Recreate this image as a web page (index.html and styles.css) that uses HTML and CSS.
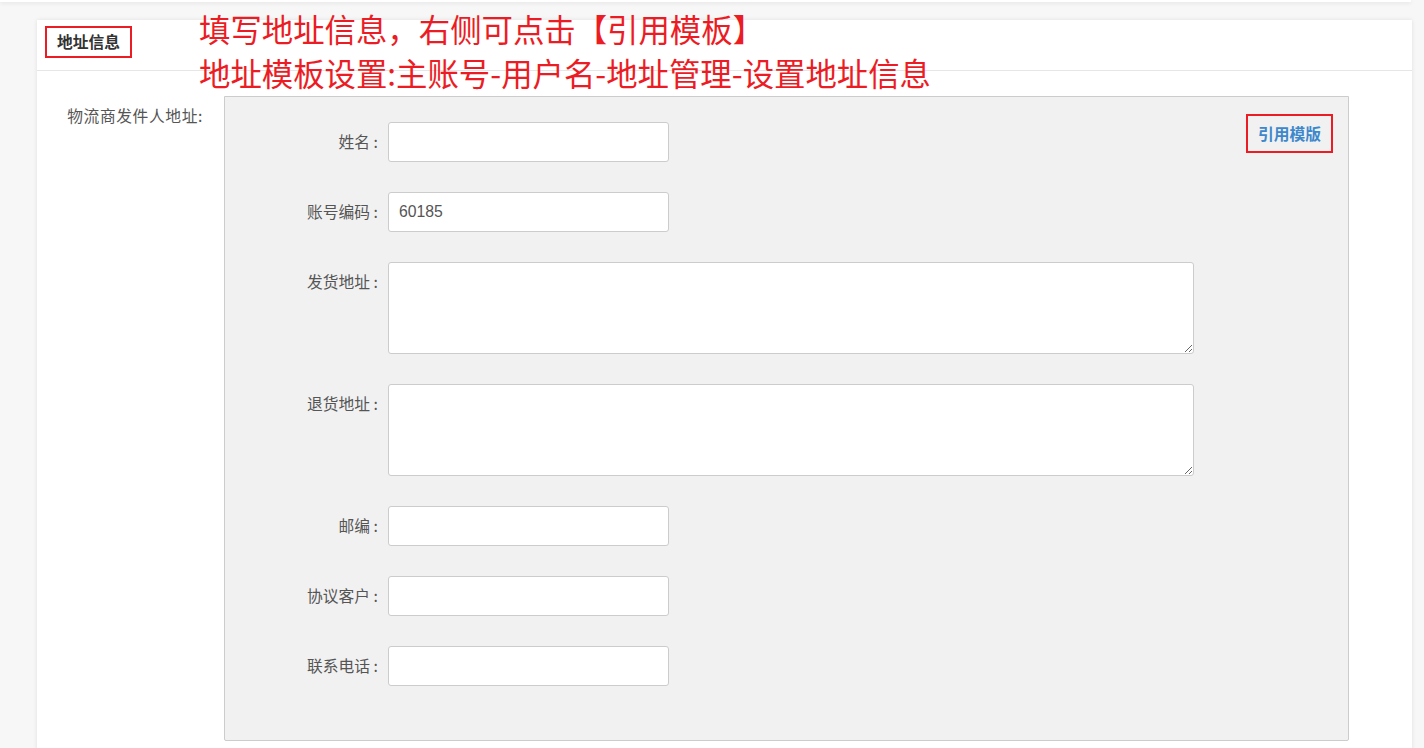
FILE: index.html
```html
<!DOCTYPE html>
<html lang="zh-CN">
<head>
<meta charset="utf-8">
<title>地址信息</title>
<link rel="stylesheet" href="styles.css">
</head>
<body>
<div class="topbar"></div>
<div class="page">
  <div class="card">
    <div class="card-head">
      <span class="title-box">地址信息</span>
    </div>
    <div class="card-body">
      <div class="outer-label">物流商发件人地址:</div>
      <div class="panel">
        <div class="form">
          <label class="lbl">姓名 :</label>
          <input class="inp" type="text" value="">
          <label class="lbl">账号编码 :</label>
          <input class="inp" type="text" value="60185">
          <label class="lbl">发货地址 :</label>
          <textarea class="ta"></textarea>
          <label class="lbl">退货地址 :</label>
          <textarea class="ta"></textarea>
          <label class="lbl">邮编 :</label>
          <input class="inp" type="text" value="">
          <label class="lbl">协议客户 :</label>
          <input class="inp" type="text" value="">
          <label class="lbl">联系电话 :</label>
          <input class="inp" type="text" value="">
        </div>
        <a class="quote-btn" href="#">引用模版</a>
      </div>
    </div>
  </div>
  <div class="note">
    <div>填写地址信息，右侧可点击【引用模板】</div>
    <div>地址模板设置:主账号-用户名-地址管理-设置地址信息</div>
  </div>
</div>
</body>
</html>
```

FILE: styles.css
```css
html, body {
  margin: 0;
  padding: 0;
  background: #f7f7f7;
  font-family: "Noto Sans CJK SC", "Liberation Sans", sans-serif;
  font-size: 15.75px;
  color: #555;
  overflow: hidden;
}

.topbar {
  width: 1411px;
  height: 2px;
  background: #fff;
  box-shadow: 0 1px 4px rgba(0, 0, 0, 0.12);
}

.page {
  position: relative;
  padding: 18px 12px 0 37px;
}

.card {
  background: #fff;
  box-shadow: 0 0 4px rgba(0, 0, 0, 0.1);
  min-height: 760px;
}

.card-head {
  height: 51px;
  box-sizing: border-box;
  padding: 6px 0 0 8px;
  border-bottom: 1px solid #e6e6e6;
}

.title-box {
  display: inline-block;
  border: 2px solid #ec1c24;
  padding: 0 10px;
  line-height: 28px;
  font-weight: bold;
  color: #333;
}

.card-body {
  display: flex;
  align-items: flex-start;
  padding: 25px 63px 0 0;
}

.outer-label {
  width: 166px;
  flex: none;
  text-align: right;
  line-height: 40px;
  margin-right: 21px;
  letter-spacing: 0.6px;
  color: #555;
}

.panel {
  flex: 1;
  display: flex;
  align-items: flex-start;
  background: #f1f1f1;
  border: 1px solid #cccccc;
  border-radius: 0 0 2px 2px;
}

.form {
  display: grid;
  grid-template-columns: 153px auto;
  column-gap: 10px;
  row-gap: 30px;
  align-items: start;
  padding: 25px 0 54px 0;
}

.lbl {
  text-align: right;
  line-height: 40px;
  color: #555;
  white-space: nowrap;
}

.inp {
  width: 281px;
  height: 40px;
  box-sizing: border-box;
  border: 1px solid #cccccc;
  border-radius: 3px;
  background: #fff;
  padding: 0 10px;
  margin: 0;
  font-family: "Liberation Sans", "Noto Sans CJK SC", sans-serif;
  font-size: 15.75px;
  color: #555;
  outline: none;
}

.ta {
  width: 806px;
  height: 92px;
  box-sizing: border-box;
  border: 1px solid #cccccc;
  border-radius: 3px;
  background: #fff;
  padding: 6px 10px;
  margin: 0;
  display: block;
  font-family: "Liberation Sans", "Noto Sans CJK SC", sans-serif;
  font-size: 15.75px;
  outline: none;
}

.quote-btn {
  margin: 17px 15px 0 auto;
  border: 2px solid #ec1c24;
  padding: 0 10px;
  line-height: 35px;
  font-weight: bold;
  color: #3d88cc;
  text-decoration: none;
  white-space: nowrap;
}

.note {
  position: absolute;
  left: 199px;
  top: 5px;
  font-size: 31.4px;
  line-height: 44px;
  color: #ec1c24;
  white-space: nowrap;
}
```
